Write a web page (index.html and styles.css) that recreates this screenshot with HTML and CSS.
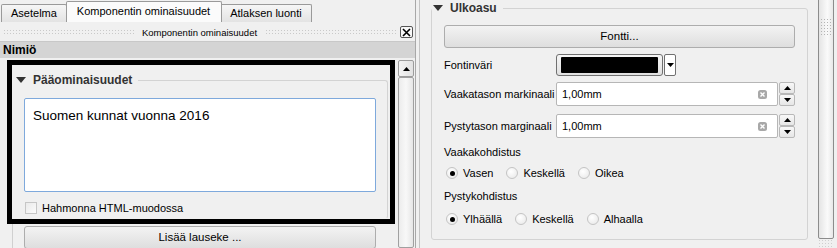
FILE: index.html
```html
<!DOCTYPE html>
<html lang="fi">
<head>
  <meta charset="UTF-8">
  <title>Komponentin ominaisuudet</title>
  <link rel="stylesheet" href="styles.css">
</head>
<body>
<div class="app">

  <!-- LEFT DOCK -->
  <div class="left">
    <div class="tabs">
      <div class="tab">Asetelma</div>
      <div class="tab active">Komponentin ominaisuudet</div>
      <div class="tab">Atlaksen luonti</div>
    </div>

    <div class="dock-title">
      <span class="grip"></span>
      <span class="dock-name">Komponentin ominaisuudet</span>
      <span class="grip"></span>
      <span class="close">
        <svg width="9" height="9" viewBox="0 0 9 9"><path d="M1 1L8 8M8 1L1 8" stroke="#000" stroke-width="1.6"/></svg>
      </span>
    </div>

    <div class="section-head">Nimiö</div>

    <div class="scroll">
      <div class="scroll-content">
        <div class="highlight">
          <fieldset class="group">
            <legend><span class="arrow"></span>Pääominaisuudet</legend>
            <div class="textarea">Suomen kunnat vuonna 2016</div>
            <div class="check"><span class="box"></span>Hahmonna HTML-muodossa</div>
          </fieldset>
        </div>
        <div class="next-group">
          <div class="btn">Lisää lauseke ...</div>
        </div>
      </div>
      <div class="vscroll">
        <div class="sb-up">
          <svg width="7" height="4" viewBox="0 0 7 4"><path d="M0 4L3.5 0L7 4Z" fill="#000"/></svg>
        </div>
        <div class="sb-track"></div>
      </div>
    </div>
  </div>

  <div class="splitter"></div>

  <!-- RIGHT DOCK -->
  <div class="right">
    <div class="right-content">
      <fieldset class="group rgroup">
        <legend><span class="arrow"></span>Ulkoasu</legend>
        <div class="btn font-btn">Fontti...</div>

        <div class="form">
          <div class="row color-row">
            <span class="lbl">Fontinväri</span>
            <span class="color-btn"><span class="swatch"></span></span>
            <span class="drop">
              <svg width="7" height="4" viewBox="0 0 7 4"><path d="M0 0L7 0L3.5 4Z" fill="#000"/></svg>
            </span>
          </div>
          <div class="row">
            <span class="lbl">Vaakatason markinaali</span>
            <span class="input"><span class="val">1,00mm</span><span class="clear">
              <svg width="9" height="9" viewBox="0 0 9 9"><rect x="0" y="0" width="9" height="9" rx="2.5" fill="#a8a8a8"/><path d="M2.5 2.5L6.5 6.5M6.5 2.5L2.5 6.5" stroke="#fff" stroke-width="1.4"/></svg>
            </span></span>
            <span class="spin"><span class="spin-btn"><svg width="7" height="4" viewBox="0 0 7 4"><path d="M0 4L3.5 0L7 4Z" fill="#000"/></svg></span><span class="spin-btn"><svg width="7" height="4" viewBox="0 0 7 4"><path d="M0 0L7 0L3.5 4Z" fill="#000"/></svg></span></span>
          </div>
          <div class="row row-last">
            <span class="lbl">Pystytason marginaali</span>
            <span class="input"><span class="val">1,00mm</span><span class="clear">
              <svg width="9" height="9" viewBox="0 0 9 9"><rect x="0" y="0" width="9" height="9" rx="2.5" fill="#a8a8a8"/><path d="M2.5 2.5L6.5 6.5M6.5 2.5L2.5 6.5" stroke="#fff" stroke-width="1.4"/></svg>
            </span></span>
            <span class="spin"><span class="spin-btn"><svg width="7" height="4" viewBox="0 0 7 4"><path d="M0 4L3.5 0L7 4Z" fill="#000"/></svg></span><span class="spin-btn"><svg width="7" height="4" viewBox="0 0 7 4"><path d="M0 0L7 0L3.5 4Z" fill="#000"/></svg></span></span>
          </div>
        </div>

        <div class="sub-lbl">Vaakakohdistus</div>
        <div class="radios">
          <span class="radio on"></span><span class="rtext">Vasen</span>
          <span class="radio"></span><span class="rtext">Keskellä</span>
          <span class="radio"></span><span class="rtext">Oikea</span>
        </div>
        <div class="sub-lbl">Pystykohdistus</div>
        <div class="radios">
          <span class="radio on"></span><span class="rtext">Ylhäällä</span>
          <span class="radio"></span><span class="rtext">Keskellä</span>
          <span class="radio"></span><span class="rtext">Alhaalla</span>
        </div>
      </fieldset>
    </div>
    <div class="rscroll">
      <div class="r-handle"><span class="dots"></span></div>
      <div class="r-foot"></div>
    </div>
  </div>

</div>
</body>
</html>
```

FILE: styles.css
```css
* { box-sizing: border-box; }
body {
  margin: 0;
  background: #f0f0f0;
  font-family: "Liberation Sans", Arial, sans-serif;
  font-size: 11px;
  color: #000;
}
.app {
  display: flex;
  width: 837px;
  height: 248px;
  overflow: hidden;
}

/* left dock */
.left {
  width: 416px;
  flex-shrink: 0;
  display: flex;
  flex-direction: column;
  border-right: 1px solid #a8a8a8;
}
.left > * { flex-shrink: 0; }
.tabs {
  display: flex;
  align-items: flex-end;
  height: 22px;
  padding-left: 1px;
}
.tab {
  height: 18px;
  line-height: 17px;
  padding: 0 9px;
  border: 1px solid #9a9a9a;
  border-bottom: none;
  border-radius: 2px 2px 0 0;
  background: linear-gradient(#f6f6f6, #e3e3e3);
}
.tab.active {
  height: 21px;
  line-height: 19px;
  padding: 0 11px 0 10px;
  background: #fbfbfb;
  margin: 0 -1px;
  position: relative;
}
.tab + .tab { margin-left: -1px; }
.dock-title {
  height: 19px;
  display: flex;
  align-items: center;
  padding: 1px 2px 0 3px;
  gap: 8px;
}
.grip {
  flex: 1;
  height: 6px;
  background-image: radial-gradient(circle, #c9c9c9 0.7px, transparent 1px);
  background-size: 3px 3px;
}
.dock-name { font-size: 9.5px; }
.close {
  width: 13px;
  height: 12px;
  border: 1px solid #555;
  border-radius: 2px;
  background: #f8f8f8;
  display: flex;
  align-items: center;
  justify-content: center;
  margin-left: -4px;
}
.section-head {
  height: 17px;
  line-height: 16px;
  padding-left: 3px;
  font-size: 12px;
  font-weight: bold;
  background: #d4d4d4;
  border-top: 1px solid #c8c8c8;
}
.scroll {
  flex: 1 1 auto;
  min-height: 0;
  overflow: hidden;
  display: flex;
  padding-top: 2px;
}
.scroll-content {
  flex: 1;
  padding-left: 7px;
}
.highlight {
  width: 388px;
  height: 164px;
  border: 5px solid #000;
  padding: 8px 2px 0 2px;
}
.group {
  margin: 0;
  padding: 0;
  border: 1px solid #d3d3d3;
  border-radius: 3px;
  min-width: 0;
}
.highlight .group {
  height: 100%;
  border-left-color: transparent;
  border-bottom-color: transparent;
}
legend {
  padding: 0 6px 0 0;
  margin-left: 0;
  font-size: 12px;
  font-weight: bold;
  color: #333;
  display: flex;
  align-items: center;
  line-height: 14px;
}
.arrow {
  width: 0;
  height: 0;
  border-left: 5px solid transparent;
  border-right: 5px solid transparent;
  border-top: 6px solid #333;
  margin: 0 7px 0 1px;
}
.textarea {
  margin: 11px 0 0 9px;
  width: 352px;
  height: 94px;
  background: #fff;
  border: 1px solid #7ea9dc;
  border-radius: 2px;
  padding: 9px 8px;
  font-size: 13.5px;
}
.check {
  display: flex;
  align-items: center;
  margin: 9px 0 0 10px;
  height: 14px;
}
.box {
  width: 12px;
  height: 12px;
  border: 1px solid #c6c6c6;
  background: linear-gradient(135deg, #eaeaea, #fbfbfb);
  margin-right: 5px;
}
.next-group {
  border-left: 1px solid #d0d0d0;
  margin-left: 5px;
  height: 40px;
  padding: 2px 0 0 11px;
}
.btn {
  height: 23px;
  line-height: 21px;
  text-align: center;
  border: 1px solid #adadad;
  border-radius: 3px;
  background: linear-gradient(#f3f3f3, #dedede);
  font-size: 11.5px;
}
.next-group .btn { width: 352px; }
.vscroll {
  width: 16px;
  margin-right: 1px;
  display: flex;
  flex-direction: column;
}
.sb-up {
  height: 17px;
  border: 1px solid #9c9c9c;
  border-radius: 2px;
  background: linear-gradient(90deg, #f4f4f4, #e2e2e2);
  display: flex;
  align-items: center;
  justify-content: center;
}
.sb-track {
  flex: 1;
  border: 1px solid #a0a0a0;
  border-radius: 2px;
  background: linear-gradient(90deg, #ececec, #f8f8f8 50%, #e6e6e6);
}
.splitter {
  width: 4px;
  flex-shrink: 0;
  border-right: 1px solid #c4c4c4;
}

/* right dock */
.right {
  flex: 1;
  display: flex;
  padding-left: 10px;
}
.right-content {
  width: 378px;
  padding-top: 1px;
}
.rgroup {
  height: 239px;
  margin-left: 1px;
  padding: 10px 12px 0 12px;
}
.rgroup legend { margin-left: -12px; }
.font-btn { width: 351px; }
.form {
  margin-top: 6px;
  display: flex;
  flex-direction: column;
  gap: 6px;
}
.row {
  display: flex;
  align-items: center;
  height: 24px;
}
.row-last { margin-top: 2px; }
.color-row { height: 22px; }
.lbl { width: 112px; }
.color-btn {
  width: 107px;
  height: 22px;
  border: 1px solid #707070;
  border-radius: 3px;
  background: linear-gradient(#f6f6f6, #e0e0e0);
  padding: 2px 4px;
}
.swatch {
  display: block;
  height: 100%;
  background: #000;
  border-radius: 1px;
}
.drop {
  width: 12px;
  height: 22px;
  margin-left: 1px;
  border: 1px solid #707070;
  border-radius: 2px;
  background: #fff;
  display: flex;
  align-items: center;
  justify-content: center;
}
.input {
  width: 222px;
  height: 24px;
  background: #fff;
  border: 1px solid #b6b6b6;
  border-radius: 2px;
  display: flex;
  align-items: center;
  justify-content: space-between;
  padding: 0 10px 0 5px;
}
.clear { display: flex; }
.spin {
  width: 16px;
  height: 24px;
  display: flex;
  flex-direction: column;
  margin-left: 1px;
}
.spin-btn {
  flex: 1;
  border: 1px solid #b8b8b8;
  border-radius: 2px;
  background: linear-gradient(#f8f8f8, #e6e6e6);
  display: flex;
  align-items: center;
  justify-content: center;
}
.sub-lbl {
  margin-top: 7px;
  height: 14px;
  line-height: 14px;
}
.radios {
  display: flex;
  align-items: center;
  height: 20px;
  margin-top: 4px;
}
.radios + .sub-lbl { margin-top: 6px; }
.sub-lbl + .radios + .sub-lbl + .radios { margin-top: 6px; }
.radio {
  width: 12px;
  height: 12px;
  border-radius: 50%;
  border: 1px solid #c4c4c4;
  background: radial-gradient(circle at 40% 35%, #fff, #e6e6e6);
  margin: 0 5px 0 2px;
  position: relative;
}
.rtext { margin-right: 11px; }
.radio.on::after {
  content: "";
  position: absolute;
  left: 2.5px;
  top: 2.5px;
  width: 5px;
  height: 5px;
  border-radius: 50%;
  background: #000;
}
.rscroll {
  width: 16px;
  margin-left: 10px;
  display: flex;
  flex-direction: column;
}
.r-handle {
  height: 241px;
  margin-top: -2px;
  border: 1px solid #8c8c8c;
  border-radius: 0 0 2px 2px;
  background: linear-gradient(90deg, #e4e4e4, #fafafa 60%, #e8e8e8);
  padding-top: 19px;
}
.dots {
  display: block;
  margin: 0 auto;
  width: 13px;
  height: 18px;
  background-image: radial-gradient(circle, #b4b4b4 0.7px, transparent 1px);
  background-size: 3px 3px;
}
.r-foot {
  flex: 1;
  background-image: radial-gradient(circle, #cfcfcf 0.7px, transparent 1px);
  background-size: 3px 3px;
}
```
